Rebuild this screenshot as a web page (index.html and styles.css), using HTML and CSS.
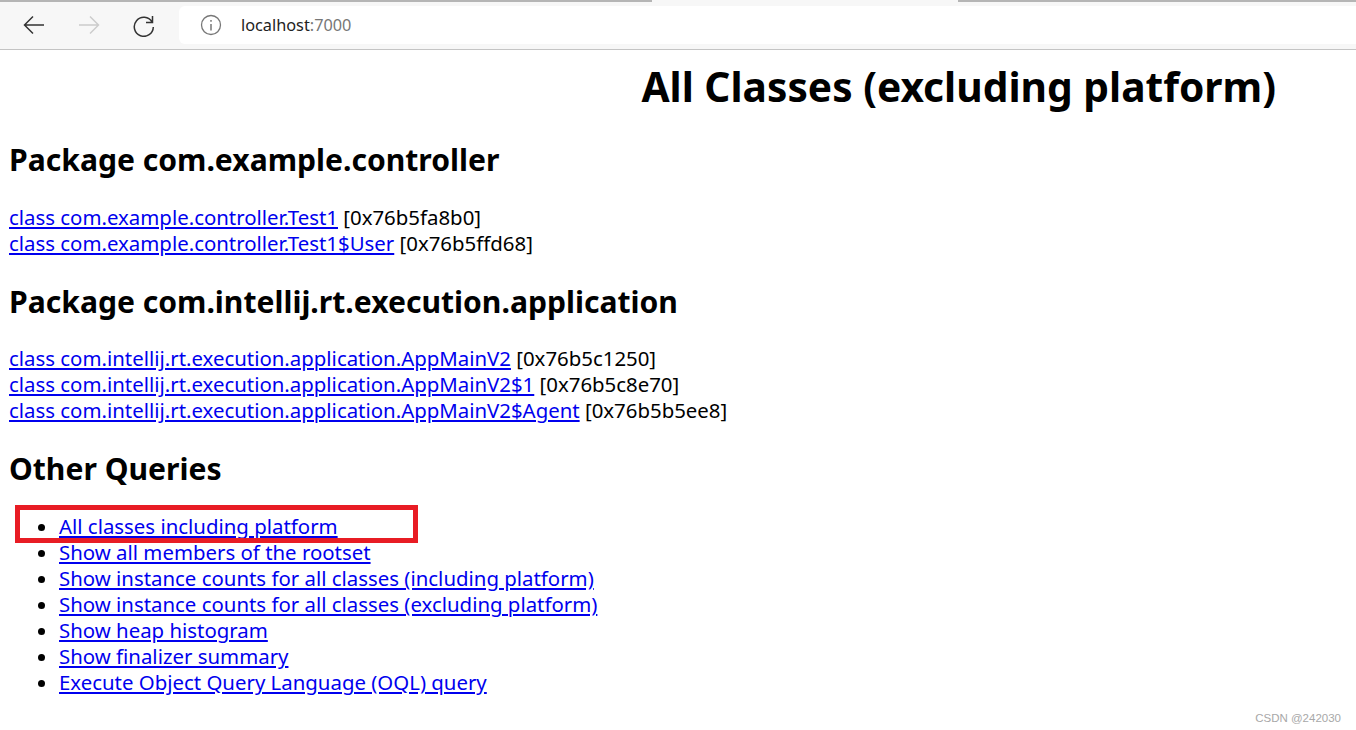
FILE: index.html
```html
<!DOCTYPE html>
<html>
<head>
  <link rel="stylesheet" href="styles.css">
</head>
<body>
  <div class="tabstrip"><div class="tab-gap"></div></div>
  <div class="toolbar">
    <svg class="nav-icon" width="24" height="24" viewBox="0 0 24 24"><path d="M22 12H2.500M11 3.500L2.500 12l8.500 8.500" fill="none" stroke="#333" stroke-width="1.500"/></svg>
    <svg class="nav-icon" width="24" height="24" viewBox="0 0 24 24"><path d="M2 12h19.500M13 3.500l8.500 8.500-8.500 8.500" fill="none" stroke="#ccc" stroke-width="1.500"/></svg>
    <svg class="nav-icon" width="24" height="24" viewBox="0 0 24 24"><path d="M20.500 3v6.500H14M20 9A9.500 9.500 0 1 0 21.300 14" fill="none" stroke="#333" stroke-width="1.500"/></svg>
    <div class="address">
      <svg width="22" height="22" viewBox="0 0 22 22"><circle cx="11" cy="11" r="9.500" fill="none" stroke="#777" stroke-width="1.300"/><path d="M11 10v6.500M11 6v1.800" stroke="#777" stroke-width="1.500"/></svg>
      <span class="host">localhost<span class="port">:7000</span></span>
    </div>
  </div>

  <div class="page">
    <h1>All Classes (excluding platform)</h1>

    <h2>Package com.example.controller</h2>
    <p>
      <a href="#">class com.example.controller.Test1</a> [0x76b5fa8b0]<br>
      <a href="#">class com.example.controller.Test1$User</a> [0x76b5ffd68]
    </p>

    <h2>Package com.intellij.rt.execution.application</h2>
    <p>
      <a href="#">class com.intellij.rt.execution.application.AppMainV2</a> [0x76b5c1250]<br>
      <a href="#">class com.intellij.rt.execution.application.AppMainV2$1</a> [0x76b5c8e70]<br>
      <a href="#">class com.intellij.rt.execution.application.AppMainV2$Agent</a> [0x76b5b5ee8]
    </p>

    <h2>Other Queries</h2>
    <ul>
      <li class="marked"><a href="#">All classes including platform</a></li>
      <li><a href="#">Show all members of the rootset</a></li>
      <li><a href="#">Show instance counts for all classes (including platform)</a></li>
      <li><a href="#">Show instance counts for all classes (excluding platform)</a></li>
      <li><a href="#">Show heap histogram</a></li>
      <li><a href="#">Show finalizer summary</a></li>
      <li><a href="#">Execute Object Query Language (OQL) query</a></li>
    </ul>
  </div>

  <div class="watermark">CSDN @242030</div>
</body>
</html>
```

FILE: styles.css
```css
html, body {
  margin: 0;
  height: 730px;
  overflow: hidden;
  background: #fff;
}
body {
  position: relative;
  font-family: "Noto Sans", "Open Sans", sans-serif;
  color: #000;
}
.tabstrip {
  height: 2px;
  background: #b5b5b5;
  display: flex;
  justify-content: center;
}
.tab-gap {
  width: 306px;
  margin-left: 254px;
  background: #f7f7f7;
}
.toolbar {
  height: 47px;
  background: #f7f7f7;
  border-bottom: 1px solid #c4c4c4;
  display: flex;
  align-items: center;
}
.nav-icon {
  margin: 0 9px 2px 22px;
  flex: none;
}
.address {
  flex: 1;
  height: 38px;
  margin: 0 0 1px 14px;
  background: #fff;
  border-radius: 6px 0 0 6px;
  display: flex;
  align-items: center;
  padding-left: 21px;
}
.host {
  margin-left: 19px;
  font-size: 16.3px;
  color: #222;
}
.port {
  color: #777;
}
.page {
  padding: 0 9px;
}
h1 {
  margin: 0;
  padding: 11px 71px 0 0;
  text-align: right;
  font-size: 40.7px;
  line-height: 50px;
  font-weight: bold;
}
h2 {
  margin: 0 0 -1px;
  font-size: 30.1px;
  line-height: 40px;
  font-weight: bold;
}
.page h1 + h2 {
  margin: 29px 0 0;
}
p {
  margin: 24px 0 26px;
  font-size: 20.4px;
  line-height: 26px;
}
ul {
  margin: 25px 0 0;
  padding-left: 50px;
  font-size: 20.4px;
  line-height: 26px;
}
a {
  color: #0000ee;
}
.marked {
  position: relative;
}
.marked::after {
  content: "";
  position: absolute;
  left: -44px;
  top: -8px;
  width: 393px;
  height: 28px;
  border: 5px solid #e81c24;
}
.watermark {
  position: absolute;
  right: 15px;
  bottom: 6px;
  font-family: "Liberation Sans", sans-serif;
  font-size: 11.500px;
  color: #a8a8a8;
}
```
